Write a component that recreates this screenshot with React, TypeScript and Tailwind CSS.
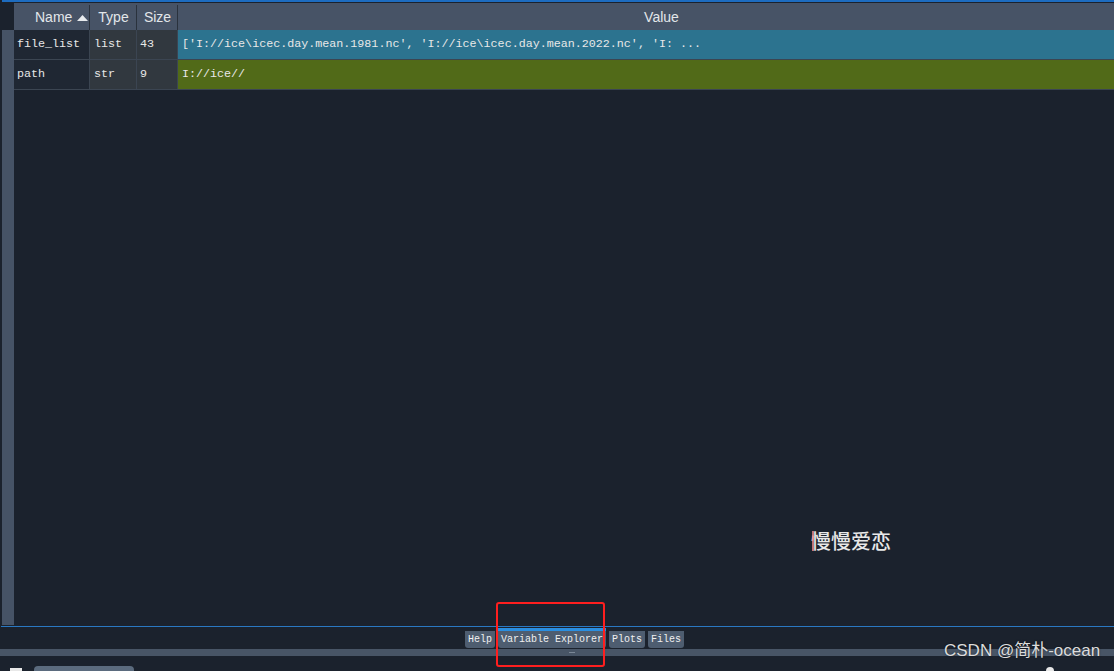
import React from "react";

const mono = { fontFamily: '"Liberation Mono", "DejaVu Sans Mono", monospace' };

function Tab({ label, active }: { label: string; active?: boolean }) {
  return (
    <div className="flex flex-col">
      <div className={active ? "h-[3px] bg-[#2a8ee0]" : "h-[3px]"} />
      <div className="h-[17px] px-[3px] bg-[#4e5d70] rounded-b-[3px] flex items-center text-[10px] leading-none text-[#f0f0f0]" style={{ fontFamily: '"Liberation Mono", "DejaVu Sans Mono", monospace' }}>
        {label}
      </div>
    </div>
  );
}

export default function App() {
  const rows = [
    {
      name: "file_list",
      type: "list",
      size: "43",
      value: "['I://ice\\icec.day.mean.1981.nc', 'I://ice\\icec.day.mean.2022.nc', 'I: ...",
      bg: "bg-[#2c738f]",
    },
    { name: "path", type: "str", size: "9", value: "I://ice//", bg: "bg-[#516a18]" },
  ];
  return (
    <div className="relative w-[1114px] h-[671px] overflow-hidden bg-[#1b222d] flex flex-col" style={{ fontFamily: '"Liberation Sans", Arial, sans-serif' }}>
      <div className="h-[2px] ml-[2px] bg-[#1d6cc0] shrink-0" />
      <div className="h-[1px] shrink-0" />
      <div className="h-[623px] flex shrink-0">
        <div className="w-[14px] shrink-0 flex flex-col pt-[27px] pb-[1px]">
          <div className="ml-[2px] flex-1 bg-[#465366]" />
        </div>
        <div className="flex-1 flex flex-col">
          <div className="h-[27px] flex bg-[#475366] text-[14px] text-[#e2e6ea] pt-[2px]">
            <div className="w-[76px] border-r border-[#2a323d] flex items-center gap-[5px] pl-[21px]">
              <span>Name</span>
              <svg width="11" height="6" viewBox="0 0 11 6"><polygon points="0,6 5.5,0 11,6" fill="#e8ebee" /></svg>
            </div>
            <div className="w-[47px] border-r border-[#2a323d] flex items-center justify-center pl-[1px]">Type</div>
            <div className="w-[41px] border-r border-[#2a323d] flex items-center justify-center pl-[1px]">Size</div>
            <div className="flex-1 flex items-center justify-center pl-[31px]">Value</div>
          </div>
          {rows.map((r) => (
            <div key={r.name} className="h-[30px] flex border-b border-[#3b4552] text-[11.7px] text-[#e8e8e8]" style={mono}>
              <div className="w-[76px] border-r border-[#3b4552] bg-[#1f2733] flex items-center pl-[3px]">{r.name}</div>
              <div className="w-[47px] border-r border-[#3b4552] bg-[#31383f] flex items-center pl-[4px]">{r.type}</div>
              <div className="w-[41px] border-r border-[#3b4552] bg-[#31383f] flex items-center pl-[3px]">{r.size}</div>
              <div className={`flex-1 ${r.bg} flex items-center pl-[4px] whitespace-pre`}>{r.value}</div>
            </div>
          ))}
        </div>
      </div>
      <div className="h-[1px] ml-[1px] bg-[#2a78c2] shrink-0" />
      <div className="h-[22px] flex justify-center items-start gap-[3px] pl-[35px] shrink-0 pt-[1px]">
        <Tab label="Help" />
        <Tab label="Variable Explorer" active />
        <Tab label="Plots" />
        <Tab label="Files" />
      </div>
      <div className="h-[7px] bg-[#485566] flex justify-center items-center shrink-0">
        <div className="w-[6px] h-[1px] bg-[#7a8796] ml-[30px]" />
      </div>
      <div className="flex-1 relative">
        <div className="absolute left-[10px] top-[12px] w-[12px] h-[6px] bg-[#e8e8e8]" />
        <div className="absolute left-[34px] top-[10px] w-[100px] h-[8px] rounded-t-[4px] bg-[#5b6b7e]" />
        <div className="absolute left-[1046px] top-[11px] w-[8px] h-[4px] rounded-t-full bg-[#e8e8e8]" />
      </div>

      {/* overlays */}
      <div className="absolute left-[811px] top-[527px] text-[20px] leading-[28px] text-[#e8e8e8] font-medium" style={{ fontFamily: '"Noto Sans CJK SC", "Noto Sans", sans-serif' }}>
        慢慢爱恋
      </div>
      <div className="absolute left-[812px] top-[531px] w-[2px] h-[20px] bg-[#e88a8a] opacity-80" />
      <div className="absolute left-[496px] top-[602px] w-[109px] h-[65px] border-[2px] border-[#ff1f1f] rounded-[3px]" />
      <div
        className="absolute left-[944px] top-[641px] text-[17px] leading-[20px] text-[#dcdcdc] whitespace-nowrap"
        style={{ fontFamily: '"Liberation Sans", "Noto Sans CJK SC", sans-serif', textShadow: "0 0 2px rgba(0,0,0,0.6)" }}
      >
        CSDN @简朴-ocean
      </div>
    </div>
  );
}
